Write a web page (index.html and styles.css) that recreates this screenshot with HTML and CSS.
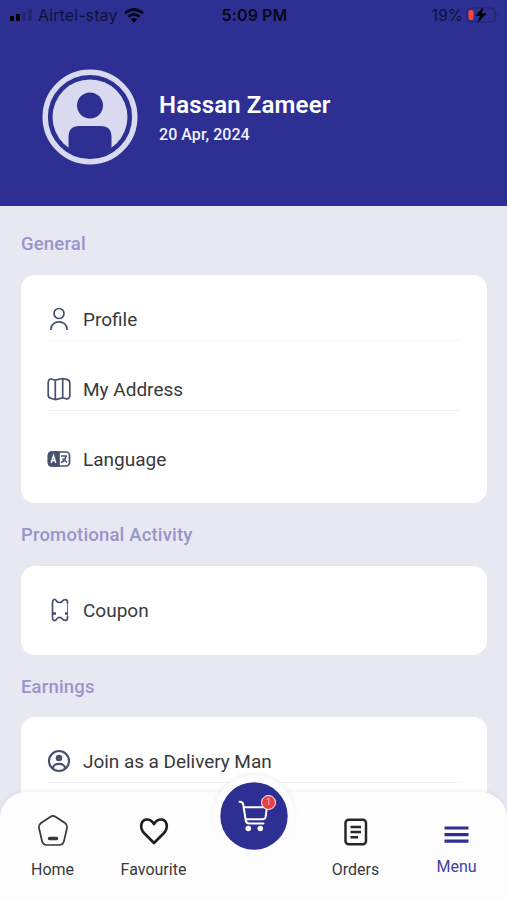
FILE: index.html
```html
<!DOCTYPE html>
<html lang="en">
<head>
<meta charset="utf-8">
<title>Menu</title>
<link rel="stylesheet" href="styles.css">
</head>
<body>
<div class="screen">
  <header class="header">
    <div class="status">
      <div class="status-left">
        <svg width="22" height="12" viewBox="0 0 22 12"><rect y="7" width="4" height="5" rx="1"/><rect x="6" y="5" width="4" height="7" rx="1"/><rect x="12" y="2.500" width="4" height="9.500" rx="1" opacity=".2"/><rect x="18" width="4" height="12" rx="1" opacity=".2"/></svg>
        <span class="carrier">Airtel-stay</span>
        <svg class="wifi" width="20" height="15" viewBox="0 0 20 15"><g fill="none" stroke="#07071c" stroke-width="2.700"><path d="M1 5.300Q10-2.300 19 5.300"/><path d="M4.300 8.800Q10 4 15.700 8.800"/></g><path d="M6.800 11.400Q10 8.600 13.200 11.400L10 14.700Z"/></svg>
      </div>
      <div class="time">5:09 PM</div>
      <div class="status-right">
        <span class="percent">19%</span>
        <svg width="33" height="16" viewBox="0 0 33 16"><rect x="1" y="1" width="28" height="14" rx="4" fill="none" stroke="#232566" stroke-width="1.200"/><path d="M31 5.500q2 2.500 0 5z" fill="#232566"/><rect x="2.500" y="3" width="5" height="10" rx="2" fill="#ff443b"/><path d="M17.500 0L9 9h5l-2.500 7L20.500 6.500h-5z"/></svg>
      </div>
    </div>
    <div class="user">
      <svg class="avatar" width="96" height="96" viewBox="0 0 96 96"><circle cx="48" cy="48" r="44.800" fill="none" stroke="#d9daf0" stroke-width="5.400"/><circle cx="48" cy="48" r="37.500" fill="#d9daf0"/><circle cx="48" cy="36.500" r="13" fill="#2d3092"/><path d="M26.500 79V68Q26.500 57 37.500 57H58.500Q69.500 57 69.500 68V79Q59 87.500 48 87.500T26.500 79Z" fill="#2d3092"/></svg>
      <div>
        <div class="name">Hassan Zameer</div>
        <div class="date">20 Apr, 2024</div>
      </div>
    </div>
  </header>
  <main class="content">
    <h2 class="title t-general">General</h2>
    <section class="card">
      <div class="row">
        <svg class="icon" viewBox="0 0 24 24"><circle cx="12" cy="6.500" r="5"/><path d="M4 23V22C4 12.500 20 12.500 20 22V23"/></svg>
        <span class="label">Profile</span>
      </div>
      <div class="row">
        <svg class="icon" viewBox="0 0 24 24"><path d="M1.200 6Q1.200 2 4.500 2L8 3.200L15.500 1.500L19.500 2.300Q22.800 3 22.800 6V18.500Q22.800 22 19.500 21.800L15.500 20.800L8.500 22.500L4.500 21.500Q1.200 21 1.200 18ZM8.300 3.200V22M15.700 1.500V20.800"/></svg>
        <span class="label">My Address</span>
      </div>
      <div class="row">
        <svg class="icon" viewBox="0 0 24 24"><rect x="1.500" y="5" width="21" height="14" rx="3.500"/><path d="M12 5H5Q1.500 5 1.500 8.500V15.500Q1.500 19 5 19H12Z" fill="#46516d"/><path d="M4.200 16L6.500 8.500L8.800 16M5 13.500H8" stroke="#fff" stroke-width="1.400"/><path d="M14 9H20M19 9Q18 14 14 15.500M15.500 11.500L20 15.500" stroke-width="1.500"/></svg>
        <span class="label">Language</span>
      </div>
    </section>
    <h2 class="title t-promo">Promotional Activity</h2>
    <section class="card card-single">
      <div class="row">
        <svg class="icon" viewBox="0 0 24 24"><path d="M5.500 16V5C5.500 1 8 .5 9.500 3C10.700 5 14.300 5 15.500 3C17 1 20.500 1 20.500 4V5.500M5.500 15V20C5.500 23 8 23.500 9.800 21C11.500 18.800 14 18.800 15.500 21C17 23 20.500 23 20.500 20V18"/><path d="M20.500 5V18" stroke-width=".8"/><path d="M5.500 15.500H9M18 15.500H21" stroke-width="2.400"/></svg>
        <span class="label">Coupon</span>
      </div>
    </section>
    <h2 class="title t-earn">Earnings</h2>
    <section class="card">
      <div class="row">
        <svg class="icon" viewBox="0 0 24 24"><circle cx="12" cy="12" r="10" stroke-width="2.200"/><circle cx="12" cy="9" r="3.300" fill="#46516d" stroke="none"/><path d="M6 20V19C6 13.500 18 13.500 18 19V20" stroke-width="2.200"/></svg>
        <span class="label label-join">Join as a Delivery Man</span>
      </div>
      <div class="row"></div>
    </section>
  </main>
  <nav class="nav">
    <div class="tab">
      <svg width="34" height="34" viewBox="0 0 34 34" fill="none" stroke="#34363a" stroke-width="1.700"><path d="M14.500 2.800Q17 1 19.500 2.800L29 9Q31.500 11 31 14L28 27Q27 31 23 31H11Q7 31 6 27L3 14Q2.500 11 5 9Z"/><path d="M13.500 24.500H20.500" stroke-width="3.400" stroke-linecap="round"/></svg>
      <span>Home</span>
    </div>
    <div class="tab">
      <svg width="34" height="34" viewBox="0 0 34 34" fill="none" stroke="#1d1e20" stroke-width="2.700" stroke-linejoin="round"><path d="M17 29L7.500 19.500C1.500 13 4.500 5.500 10 5.500C13.500 5.500 15.500 7.500 17 10C18.500 7.500 20.500 5.500 24 5.500C29.500 5.500 32.500 13 26.500 19.500Z"/></svg>
      <span>Favourite</span>
    </div>
    <div class="tab"></div>
    <div class="tab">
      <svg width="34" height="34" viewBox="0 0 34 34" fill="none" stroke="#26282a" stroke-width="2.500"><rect x="6.500" y="5.800" width="20.500" height="24.400" rx="3.200"/><path d="M11.500 13H22M11.500 18H22M11.500 23.300H19"/></svg>
      <span>Orders</span>
    </div>
    <div class="tab active">
      <svg width="34" height="34" viewBox="0 0 34 34" stroke="#2d3092" stroke-width="3.200"><path d="M4.500 14H28.500M4.500 20.600H28.500M4.500 27.200H28.500"/></svg>
      <span>Menu</span>
    </div>
    <div class="cart">
      <svg width="68" height="68" viewBox="0 0 68 68"><circle cx="34" cy="34" r="33.700" fill="#2d3092"/><g fill="none" stroke="#fff" stroke-width="2" stroke-linecap="round" stroke-linejoin="round"><path d="M19.500 19.700Q22.800 19.500 23.200 22.500L25.700 38Q26.200 41.500 29 41.500H43.500M24 25.200H47L45.500 35.500Q45 37.200 43 37.200H26"/></g><circle cx="28.300" cy="46.500" r="2.800" fill="#fff"/><circle cx="40.300" cy="46.500" r="2.800" fill="#fff"/></svg>
      <span class="badge">1</span>
    </div>
  </nav>
</div>
</body>
</html>
```
FILE: styles.css
```css
* { box-sizing: border-box; }
body { margin: 0; font-family: Roboto, sans-serif; color: #38393c; }
.screen { position: relative; width: 507px; height: 900px; overflow: hidden; background: #e8e8f2; }
svg { display: block; flex: none; }
.header { height: 206px; background: #2d3092; }
.status { display: grid; grid-template-columns: 1fr auto 1fr; align-items: center; height: 30px; padding: 0 8px 0 10px; font: 500 16px/20px Inter, sans-serif; color: #101139; }
.status-left, .status-right { display: flex; align-items: center; }
.status-right { justify-content: flex-end; gap: 3px; }
.carrier { margin-left: 6px; font-weight: 400; letter-spacing: .1px; }
.wifi { margin-left: 6px; }
.time { font-weight: 600; color: #07071c; letter-spacing: .1px; }
.percent { padding-top: 1px; font-weight: 400; font-size: 15.500px; }
.user { display: flex; align-items: center; gap: 17px; padding: 39px 0 0 42px; }
.avatar { margin-right: 4px; }
.name { font-size: 24px; line-height: 28px; font-weight: 600; letter-spacing: .15px; color: #fff; }
.date { margin-top: 6px; font-size: 16px; line-height: 20px; font-weight: 500; letter-spacing: .05px; color: #eff0ff; }
.user > div { padding-top: 2px; }
.content { padding: 0 20px 0 21px; }
.title { margin: 0; display: flex; align-items: center; font-size: 18.500px; line-height: 22px; font-weight: 500; letter-spacing: .17px; color: #9795ca; white-space: nowrap; }
.t-general { height: 69px; padding-top: 7px; }
.t-promo { height: 63px; padding-top: 1px; }
.t-earn { height: 62px; padding-top: 1px; }
.card { display: flex; flex-direction: column; gap: 26px; padding: 22px 27px 22px 26px; border-radius: 14px; background: #fff; box-shadow: 0 0 4px #e9eaed; }
.card-single { height: 89px; }
.row { display: flex; align-items: center; height: 44px; gap: 12px; font-size: 19px; border-bottom: 1px solid #f1f2f5; white-space: nowrap; }
.row:last-child { border-bottom-color: transparent; }
.label { padding-top: 2px; }
.label-join { letter-spacing: -.05px; }
.icon { width: 24px; height: 24px; fill: none; stroke: #46516d; stroke-width: 1.700; }
.nav { position: absolute; left: 0; right: 0; bottom: 0; height: 108px; padding: 22px 0 0 2px; display: grid; grid-template-columns: repeat(5, 1fr); background: #fdfdfe; border-radius: 26px 26px 0 0; box-shadow: 0 -1px 4px #00000012; }
.tab { display: flex; flex-direction: column; align-items: center; gap: 12px; font-size: 16px; line-height: 20px; }
.active { color: #4340a3; gap: 9px; }
.cart { position: absolute; left: 213px; top: -17px; width: 82px; height: 82px; padding: 7px; border-radius: 50%; background: #fdfdfe; box-shadow: 0 -2px 4px #0000000d; }
.badge { position: absolute; left: 48px; top: 20px; width: 15px; height: 15px; border: 1px solid #fff; border-radius: 50%; background: #e84045; color: #ffc9cb; font-size: 9px; line-height: 13px; text-align: center; }
```
